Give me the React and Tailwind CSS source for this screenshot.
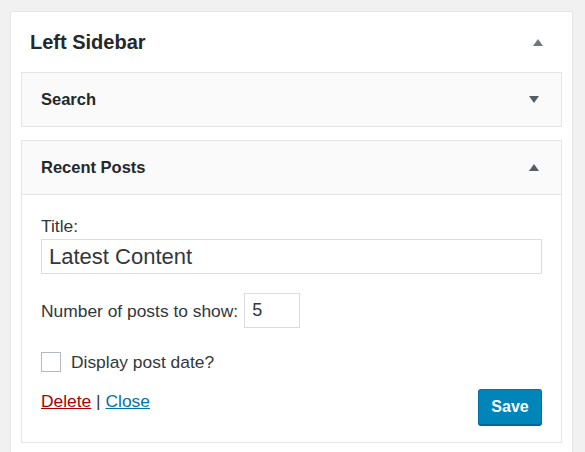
import React, { useState } from "react";

const font = { fontFamily: '"Liberation Sans", Arial, sans-serif' };

function Arrow({ up, className }) {
  return (
    <svg width="10" height="7" viewBox="0 0 10 7" className={className}>
      {up ? <path d="M0 7 L5 0 L10 7 Z" fill="currentColor" /> : <path d="M0 0 L10 0 L5 7 Z" fill="currentColor" />}
    </svg>
  );
}

function WidgetTop({ title, open }) {
  return (
    <div className="flex h-[53px] items-center justify-between bg-[#fafafa] pl-[19px] pr-[22px]">
      <h3 className="text-[16.5px] font-bold text-[#23282d]">{title}</h3>
      <Arrow up={open} className="text-[#555d66]" />
    </div>
  );
}

export default function App() {
  const [title, setTitle] = useState("Latest Content");
  const [count, setCount] = useState("5");
  const [showDate, setShowDate] = useState(false);

  return (
    <div className="min-h-screen bg-[#f1f1f1] pt-[11px]" style={font}>
      <div className="ml-[10px] w-[563px] border border-b-0 border-[#e5e5e5] bg-white pb-[20px]">
        {/* sidebar header */}
        <div className="flex h-[60px] items-center justify-between pl-[19px] pr-[29px]">
          <h2 className="text-[20px] font-bold text-[#23282d]">Left Sidebar</h2>
          <Arrow up className="text-[#72777c]" />
        </div>

        <div className="flex flex-col gap-[13px] px-[10px]">
          <div className="border border-[#e5e5e5]">
            <WidgetTop title="Search" />
          </div>

          <div className="border border-[#e5e5e5]">
            <WidgetTop title="Recent Posts" open />
            <div className="border-t border-[#e5e5e5] bg-white px-[19px] pb-[17px] pt-[19px] text-[17.4px] leading-[24px] text-[#32373c]">
              <label className="block">Title:</label>
              <input
                value={title}
                onChange={(e) => setTitle(e.target.value)}
                className="mt-[1px] block h-[35px] w-full border border-[#ddd] px-[7px] text-[22px] text-[#32373c] outline-none"
              />

              <div className="mt-[19px] flex items-center">
                <span>Number of posts to show:</span>
                <input
                  value={count}
                  onChange={(e) => setCount(e.target.value)}
                  className="ml-[6px] h-[35px] w-[56px] border border-[#ddd] px-[7px] text-[18px] text-[#32373c] outline-none"
                />
              </div>

              <label className="mt-[22px] flex items-center">
                <span
                  onClick={() => setShowDate(!showDate)}
                  className="flex h-[20px] w-[20px] items-center justify-center border border-[#b4b9be] bg-white"
                >
                  {showDate ? <span className="text-[14px] text-[#1e8cbe]">✓</span> : null}
                </span>
                <span className="ml-[10px]">Display post date?</span>
              </label>

              <div className="mt-[15px] flex items-start justify-between">
                <div>
                  <a href="#" className="text-[#a00] underline">Delete</a>
                  {" | "}
                  <a href="#" className="text-[#0073aa] underline">Close</a>
                </div>
                <button className="h-[36px] w-[64px] rounded-[3px] border border-[#0073aa] border-b-[#006799] bg-[#0085ba] text-[16px] font-bold text-white shadow-[0_1px_0_#006799]">
                  Save
                </button>
              </div>
            </div>
          </div>
        </div>
      </div>
    </div>
  );
}
